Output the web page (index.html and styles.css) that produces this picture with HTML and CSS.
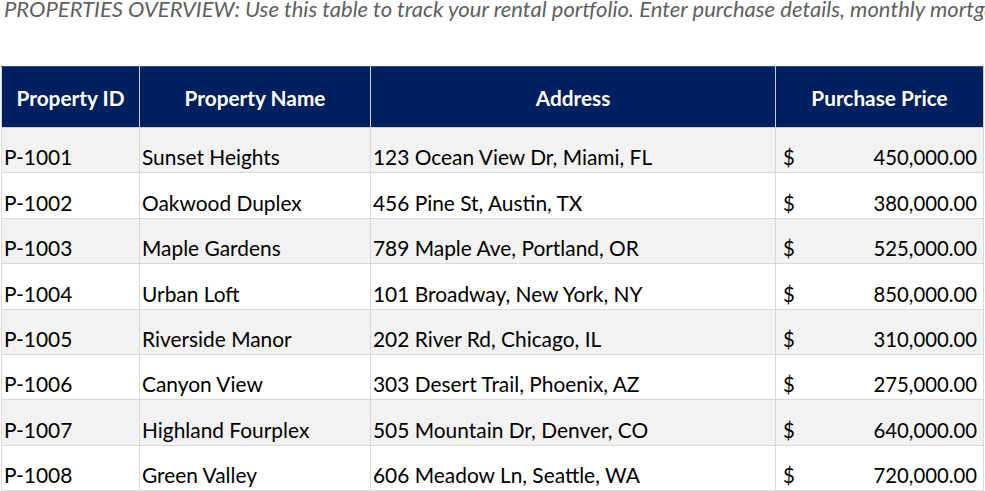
FILE: index.html
```html
<!DOCTYPE html>
<html>
<head>
<meta charset="utf-8">
<link rel="stylesheet" href="styles.css">
</head>
<body>
<div class="intro">PROPERTIES OVERVIEW: Use this table to track your rental portfolio. Enter purchase details, monthly mortgage payments, and current rental income for each property.</div>
<table class="sheet">
  <colgroup>
    <col class="c1"><col class="c2"><col class="c3"><col class="c4">
  </colgroup>
  <thead>
    <tr><th>Property ID</th><th>Property Name</th><th>Address</th><th>Purchase Price</th></tr>
  </thead>
  <tbody>
    <tr><td>P-1001</td><td>Sunset Heights</td><td>123 Ocean View Dr, Miami, FL</td><td class="money"><span>$</span><span>450,000.00</span></td></tr>
    <tr><td>P-1002</td><td>Oakwood Duplex</td><td>456 Pine St, Austin, TX</td><td class="money"><span>$</span><span>380,000.00</span></td></tr>
    <tr><td>P-1003</td><td>Maple Gardens</td><td>789 Maple Ave, Portland, OR</td><td class="money"><span>$</span><span>525,000.00</span></td></tr>
    <tr><td>P-1004</td><td>Urban Loft</td><td>101 Broadway, New York, NY</td><td class="money"><span>$</span><span>850,000.00</span></td></tr>
    <tr><td>P-1005</td><td>Riverside Manor</td><td>202 River Rd, Chicago, IL</td><td class="money"><span>$</span><span>310,000.00</span></td></tr>
    <tr><td>P-1006</td><td>Canyon View</td><td>303 Desert Trail, Phoenix, AZ</td><td class="money"><span>$</span><span>275,000.00</span></td></tr>
    <tr><td>P-1007</td><td>Highland Fourplex</td><td>505 Mountain Dr, Denver, CO</td><td class="money"><span>$</span><span>640,000.00</span></td></tr>
    <tr><td>P-1008</td><td>Green Valley</td><td>606 Meadow Ln, Seattle, WA</td><td class="money"><span>$</span><span>720,000.00</span></td></tr>
  </tbody>
</table>
</body>
</html>
```
FILE: styles.css
```css
html, body {
  margin: 0;
  padding: 0;
  background: #ffffff;
  overflow: hidden;
}
body {
  font-family: Lato, "Liberation Sans", sans-serif;
  color: #000000;
  width: 985px;
  height: 491px;
}
.intro {
  font-style: italic;
  font-size: 22px;
  color: #5f5f5f;
  white-space: nowrap;
  overflow: hidden;
  height: 66px;
  line-height: 17px;
  padding-left: 4px;
  box-sizing: border-box;
}
.sheet {
  border-collapse: collapse;
  table-layout: fixed;
  width: 983px;
  margin-left: 1px;
}
.c1 { width: 138px; }
.c2 { width: 231px; }
.c3 { width: 405px; }
.c4 { width: 208px; }
.sheet thead tr { height: 61px; }
.sheet tbody tr { height: 45.4px; }
.sheet th {
  background: #002060;
  color: #ffffff;
  font-weight: 700;
  font-size: 20.8px;
  padding: 0;
  text-align: center;
  vertical-align: middle;
  border: 1px solid #c9d0dc;
  border-top: 1px solid #3a4f85;
}
.sheet td {
  font-size: 20.9px;
  padding: 0 2px 3px 2px;
  vertical-align: bottom;
  border: 1px solid #d9d9d9;
  white-space: nowrap;
  overflow: hidden;
  line-height: 24px;
}
.sheet tbody tr:nth-child(odd) td {
  background: #f2f2f2;
}
.sheet td.money {
  padding-left: 7px;
  padding-right: 6px;
  font-size: 20.3px;
}
.money span:first-child {
  float: left;
}
.money span:last-child {
  float: right;
}
```
